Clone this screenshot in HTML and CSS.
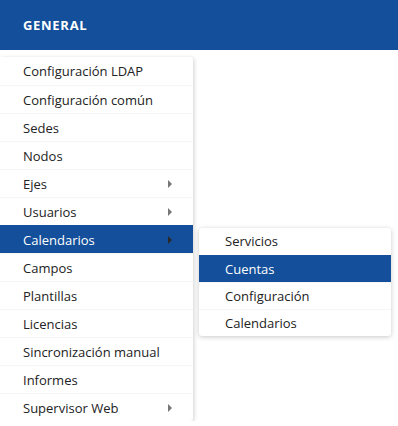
FILE: index.html
```html
<!DOCTYPE html>
<html lang="es">
<head>
  <meta charset="UTF-8" />
  <title>General</title>
  <link rel="stylesheet" href="styles.css">
</head>
<body>

  <div class="top-bar">GENERAL</div>

  <ul class="menu">
    <li class="menu-item">Configuración LDAP</li>
    <li class="menu-item">Configuración común</li>
    <li class="menu-item">Sedes</li>
    <li class="menu-item">Nodos</li>
    <li class="menu-item has-sub">Ejes</li>
    <li class="menu-item has-sub">Usuarios</li>
    <li class="menu-item has-sub active">Calendarios
      <ul class="submenu">
        <li class="menu-item">Servicios</li>
        <li class="menu-item active">Cuentas</li>
        <li class="menu-item">Configuración</li>
        <li class="menu-item">Calendarios</li>
      </ul>
    </li>
    <li class="menu-item">Campos</li>
    <li class="menu-item">Plantillas</li>
    <li class="menu-item">Licencias</li>
    <li class="menu-item">Sincronización manual</li>
    <li class="menu-item">Informes</li>
    <li class="menu-item has-sub">Supervisor Web</li>
  </ul>

</body>
</html>
```

FILE: styles.css
```css
body {
  margin: 0;
  font-family: 'Open Sans', 'Noto Sans', sans-serif;
  font-size: 13px;
  color: #222;
  background-color: #fff;
}

.top-bar {
  height: 50px;
  line-height: 50px;
  padding-left: 23px;
  background-color: #134f9a;
  color: #fff;
  font-weight: 700;
  font-size: 13px;
  letter-spacing: 0.7px;
}

.menu,
.submenu {
  list-style: none;
  margin: 0;
  padding: 0;
  background-color: #fff;
}

.menu {
  margin-top: 7px;
  width: 193px;
  box-shadow: 1px 1px 4px rgba(0,0,0,0.18);
  border-radius: 0 3px 3px 0;
}

.menu-item {
  position: relative;
  height: 28px;
  line-height: 28px;
  padding-left: 23px;
  border-top: 1px solid #f6f6f6;
  box-sizing: border-box;
  white-space: nowrap;
}

.menu > .menu-item:first-child,
.submenu > .menu-item:first-child {
  border-top: none;
}

.menu-item.active {
  background-color: #134f9a;
  color: #fff;
  border-top-color: #134f9a;
}

.has-sub::after {
  content: '';
  position: absolute;
  left: 168px;
  top: 10px;
  border-left: 4px solid #777;
  border-top: 4px solid transparent;
  border-bottom: 4px solid transparent;
}

.has-sub.active::after {
  border-left-color: #2a2a2a;
}

.submenu {
  position: absolute;
  left: 199px;
  top: 2px;
  width: 192px;
  color: #222;
  border-radius: 3px;
  box-shadow: 0 1px 5px rgba(0,0,0,0.22);
}

.submenu .menu-item {
  height: 27px;
  line-height: 27px;
  padding-left: 26px;
}
```
